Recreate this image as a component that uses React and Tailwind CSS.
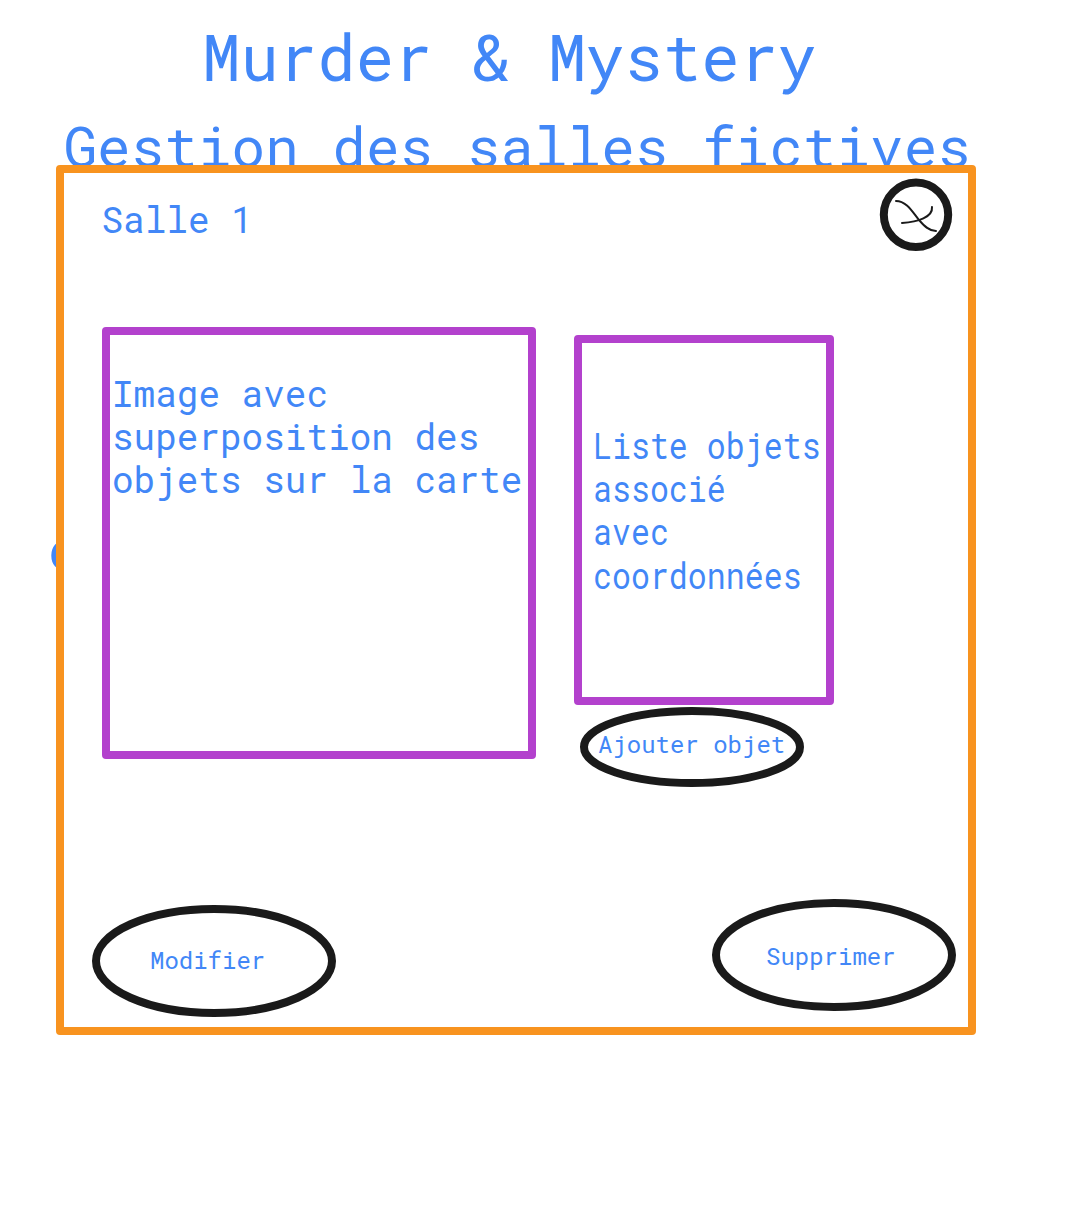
function OvalButton({ w, h, className, textClassName, children }) {
  return (
    <button className={`grid shrink-0 ${className}`}>
      <svg
        className="col-start-1 row-start-1 block overflow-visible"
        width={w}
        height={h}
        viewBox={`0 0 ${w} ${h}`}
        fill="none"
        stroke="#1a1a1a"
        strokeWidth="8"
      >
        <ellipse cx={w / 2} cy={h / 2} rx={w / 2 - 4} ry={h / 2 - 4} />
      </svg>
      <span
        className={`col-start-1 row-start-1 text-left text-[24px] leading-[29px] whitespace-nowrap ${textClassName}`}
      >
        {children}
      </span>
    </button>
  );
}

function CloseButton() {
  return (
    <button className="mt-[6px] mr-4 size-[72px]" aria-label="Fermer">
      <svg
        viewBox="0 0 72 72"
        className="block size-full overflow-visible"
        fill="none"
        stroke="#1a1a1a"
        strokeLinecap="round"
      >
        <circle cx="36" cy="35.8" r="32.2" strokeWidth="8" />
        <path d="M16 22C27 22 33 34 38.5 40.3C44 47 49 52 56 52" strokeWidth="2" />
        <path d="M22 44C38 43 53 38 52 28" strokeWidth="2" />
      </svg>
    </button>
  );
}

export default function App() {
  return (
    <main className="h-[1220px] w-[1084px] overflow-hidden bg-white pt-[18px] font-['Roboto_Mono','DejaVu_Sans_Mono',monospace] text-[#4287f7]">
      <h1 className="ml-[202px] text-[64px] leading-[77px] whitespace-nowrap">Murder &amp; Mystery</h1>
      <h2 className="mt-[17px] ml-[63.5px] text-[56px] leading-[67px] whitespace-nowrap">
        Gestion des salles fictives
      </h2>
      <div className="relative -mt-[14px] ml-12">
        <span className="absolute top-[350px] left-0 text-[56px] leading-[67px]">o</span>
        <section className="relative ml-2 flex h-[870px] w-[920px] flex-col rounded-[4px] border-8 border-[#f8931f] bg-white">
          <header className="flex h-[154px] shrink-0 justify-between">
            <h3 className="mt-[25px] ml-[37.5px] text-[36px] leading-[43px]">Salle 1</h3>
            <CloseButton />
          </header>
          <div className="ml-[38px] flex h-[460px] gap-[38px]">
            <div className="h-[432px] w-[434px] rounded-[4px] border-8 border-[#b341cd] pt-[37px] pl-[2px] text-[36px] leading-[43.2px] whitespace-nowrap">
              Image avec
              <br />
              superposition des
              <br />
              objets sur la carte
            </div>
            <div className="mt-2 flex w-[260px] flex-col">
              <div className="h-[370px] shrink-0 rounded-[4px] border-8 border-[#b341cd] pt-[81px] pl-[11px] whitespace-nowrap">
                <p className="origin-left scale-x-[0.878] text-[36px] leading-[43.2px]">
                  Liste objets
                  <br />
                  associé
                  <br />
                  avec
                  <br />
                  coordonnées
                </p>
              </div>
              <OvalButton w={224} h={80} className="mt-[2px] ml-[6px] w-[224px]" textClassName="mt-[23px] ml-[18px]">
                Ajouter objet
              </OvalButton>
            </div>
          </div>
          <footer className="mr-3 ml-7 flex h-[240px] items-end justify-between pb-[10px]">
            <OvalButton w={244} h={112} className="mt-[6px]" textClassName="mt-[41px] ml-[58px]">
              Modifier
            </OvalButton>
            <OvalButton w={244} h={112} className="mb-[6px]" textClassName="mt-[43px] ml-[54px]">
              Supprimer
            </OvalButton>
          </footer>
        </section>
      </div>
    </main>
  );
}
